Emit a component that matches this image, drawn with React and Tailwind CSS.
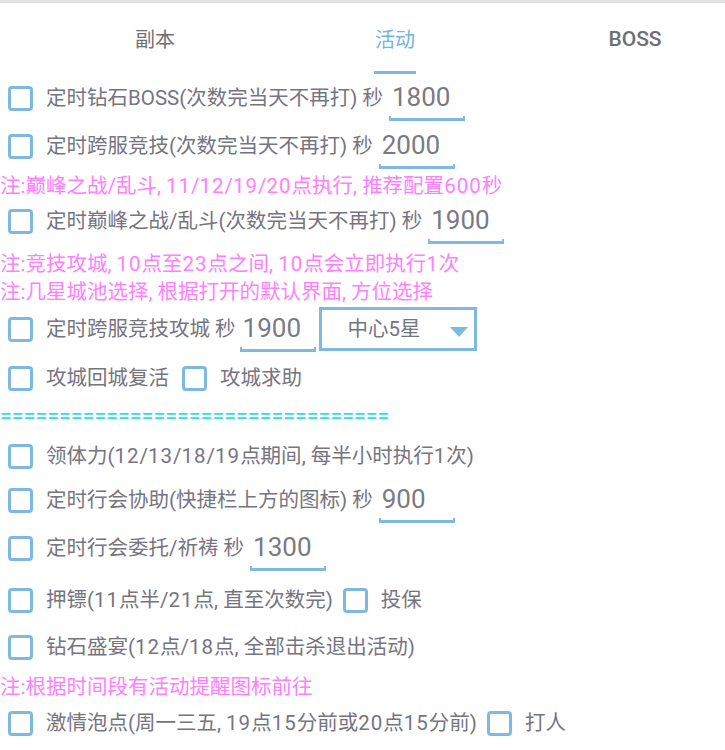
import React from "react";

const FONT = { fontFamily: 'Roboto, "Noto Sans CJK SC", sans-serif' };

function T({ children }) {
  const parts = String(children).split(/(\d+|,)/);
  return (
    <>
      {parts.map((p, i) => {
        if (p === ",") return <span key={i} className="mr-[5px]">,</span>;
        if (/^\d+$/.test(p)) return <span key={i} className="tracking-[1px]">{p}</span>;
        return <React.Fragment key={i}>{p}</React.Fragment>;
      })}
    </>
  );
}

function Box() {
  return <div className="w-[25px] h-[25px] shrink-0 rounded-[4px] border-[3px] border-[#7fb9e3] bg-white" />;
}

function Input({ value, w = 76 }) {
  return (
    <div className="flex flex-col h-[43px] justify-end shrink-0 mt-[2px]" style={{ width: w }}>
      <div className="text-[26px] leading-[30px] text-[#7a7a84] pl-[3px] pb-[4px]">{value}</div>
      <div className="h-[5px] border-b-[3px] border-x-2 border-[#7fb9e3]" />
    </div>
  );
}

function Row({ mt, h = 40, children }) {
  return (
    <div className="flex items-center pl-[8px]" style={{ marginTop: mt, height: h }}>
      {children}
    </div>
  );
}

function Label({ children }) {
  return (
    <span className="ml-[13px] text-[20.5px] text-[#75757f] whitespace-nowrap">
      <T>{children}</T>
    </span>
  );
}

function Note({ mt, children }) {
  return (
    <div className="h-[28px] flex items-center text-[20.5px] text-[#ff80ff] whitespace-nowrap" style={{ marginTop: mt }}>
      <T>{children}</T>
    </div>
  );
}

export default function App() {
  return (
    <div className="w-[725px] h-[750px] bg-white overflow-hidden" style={FONT}>
      <div className="h-[3px] bg-[#e2e2e2]" />
      <div className="h-[72px] flex pl-[35px]">
        <div className="w-[240px] shrink-0 h-[68px] flex items-center justify-center text-[20px] text-[#6e6e76] pt-[6px]">副本</div>
        <div className="w-[240px] shrink-0 flex flex-col items-center">
          <div className="h-[68px] flex items-center text-[20px] text-[#70b5e2] pt-[6px]">活动</div>
          <div className="w-[42px] h-[3px] bg-[#7fb9e3]" />
        </div>
        <div className="w-[240px] shrink-0 h-[68px] flex items-center justify-center text-[21px] font-medium text-[#6e6e76] pt-[6px]">BOSS</div>
      </div>

      <Row mt={3}>
        <Box />
        <Label>定时钻石BOSS(次数完当天不再打) 秒</Label>
        <div className="ml-[6px]"><Input value="1800" /></div>
      </Row>
      <Row mt={8}>
        <Box />
        <Label>定时跨服竞技(次数完当天不再打) 秒</Label>
        <div className="ml-[6px]"><Input value="2000" /></div>
      </Row>
      <Note mt={6}>注:巅峰之战/乱斗,11/12/19/20点执行,推荐配置600秒</Note>
      <Row mt={1}>
        <Box />
        <Label>定时巅峰之战/乱斗(次数完当天不再打) 秒</Label>
        <div className="ml-[6px]"><Input value="1900" /></div>
      </Row>
      <Note mt={9}>注:竞技攻城,10点至23点之间,10点会立即执行1次</Note>
      <Note mt={0}>注:几星城池选择,根据打开的默认界面,方位选择</Note>
      <Row mt={1} h={44}>
        <Box />
        <Label>定时跨服竞技攻城 秒</Label>
        <div className="ml-[4px]"><Input value="1900" /></div>
        <div className="ml-[3px] w-[158px] h-[44px] shrink-0 border-[3px] border-[#7fb9e3] flex items-center relative">
          <span className="ml-[26px] text-[20.5px] text-[#75757f]">中心5星</span>
          <svg className="absolute right-[6px] top-[17px]" width="18" height="10" viewBox="0 0 18 10">
            <polygon points="0,0 18,0 9,10" fill="#7fb9e3" />
          </svg>
        </div>
      </Row>
      <Row mt={7}>
        <Box />
        <Label>攻城回城复活</Label>
        <div className="ml-[13px]"><Box /></div>
        <Label>攻城求助</Label>
      </Row>
      <div className="h-[20px] mt-[8px] flex items-center text-[21.5px] leading-none text-[#2fdce8] whitespace-nowrap">
        =================================
      </div>
      <Row mt={10}>
        <Box />
        <Label>领体力(12/13/18/19点期间,每半小时执行1次)</Label>
      </Row>
      <Row mt={4}>
        <Box />
        <Label>定时行会协助(快捷栏上方的图标) 秒</Label>
        <div className="ml-[6px]"><Input value="900" /></div>
      </Row>
      <Row mt={8}>
        <Box />
        <Label>定时行会委托/祈祷 秒</Label>
        <div className="ml-[6px]"><Input value="1300" /></div>
      </Row>
      <Row mt={12}>
        <Box />
        <Label>押镖(11点半/21点,直至次数完)</Label>
        <div className="ml-[10px]"><Box /></div>
        <Label>投保</Label>
      </Row>
      <Row mt={7}>
        <Box />
        <Label>钻石盛宴(12点/18点,全部击杀退出活动)</Label>
      </Row>
      <Note mt={6}>注:根据时间段有活动提醒图标前往</Note>
      <Row mt={2}>
        <Box />
        <Label>激情泡点(周一三五,19点15分前或20点15分前)</Label>
        <div className="ml-[10px]"><Box /></div>
        <Label>打人</Label>
      </Row>
    </div>
  );
}
